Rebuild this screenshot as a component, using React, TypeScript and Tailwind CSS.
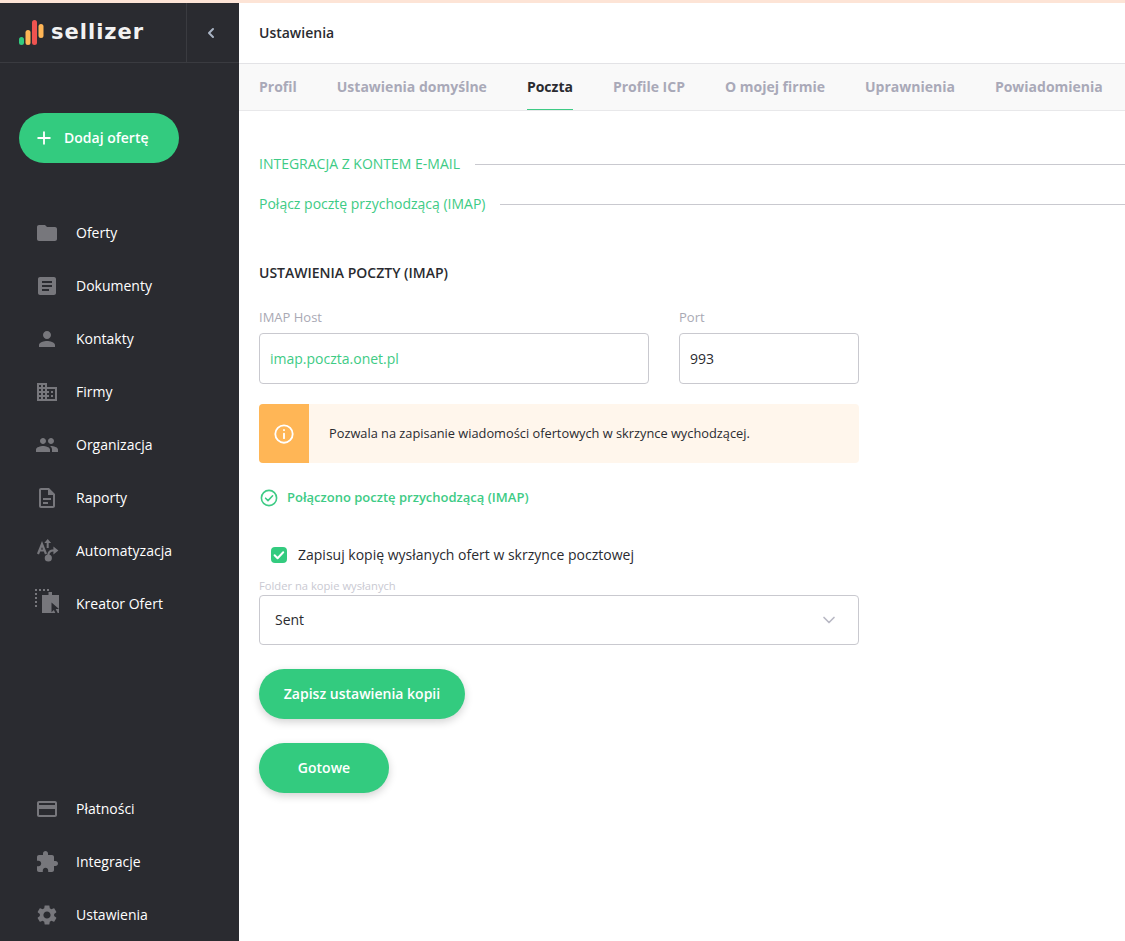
import { ChevronDown, ChevronLeft, Plus } from 'lucide-react'
import type { ReactNode } from 'react'

const icons: Record<string, ReactNode> = {
  folder: <path d="M10 4H4c-1.1 0-1.99.9-1.99 2L2 18c0 1.1.9 2 2 2h16c1.1 0 2-.9 2-2V8c0-1.1-.9-2-2-2h-8l-2-2z" />,
  article: <path d="M19 3H5c-1.1 0-2 .9-2 2v14c0 1.1.9 2 2 2h14c1.1 0 2-.9 2-2V5c0-1.1-.9-2-2-2zm-5 14H7v-2h7v2zm3-4H7v-2h10v2zm0-4H7V7h10v2z" />,
  person: <path d="M12 12c2.21 0 4-1.79 4-4s-1.79-4-4-4-4 1.79-4 4 1.79 4 4 4zm0 2c-2.67 0-8 1.34-8 4v2h16v-2c0-2.66-5.33-4-8-4z" />,
  domain: <path d="M12 7V3H2v18h20V7H12zM6 19H4v-2h2v2zm0-4H4v-2h2v2zm0-4H4V9h2v2zm0-4H4V5h2v2zm4 12H8v-2h2v2zm0-4H8v-2h2v2zm0-4H8V9h2v2zm0-4H8V5h2v2zm10 12h-8v-2h2v-2h-2v-2h2v-2h-2V9h8v10zm-2-8h-2v2h2v-2zm0 4h-2v2h2v-2z" />,
  people: <path d="M16 11c1.66 0 2.99-1.34 2.99-3S17.66 5 16 5c-1.66 0-3 1.34-3 3s1.34 3 3 3zm-8 0c1.66 0 2.99-1.34 2.99-3S9.66 5 8 5C6.34 5 5 6.34 5 8s1.34 3 3 3zm0 2c-2.33 0-7 1.17-7 3.5V19h14v-2.5c0-2.33-4.67-3.5-7-3.5zm8 0c-.29 0-.62.02-.97.05 1.16.84 1.97 1.97 1.97 3.45V19h6v-2.5c0-2.33-4.67-3.5-7-3.5z" />,
  report: <path d="M8 16h5v2H8zm0-4h8v2H8zm6-10H6c-1.1 0-2 .9-2 2v16c0 1.1.89 2 1.99 2H18c1.1 0 2-.9 2-2V8l-6-6zm4 18H6V4h7v5h5v11z" />,
  auto: (
    <>
      <path d="M3 15L7 5l4 10M4.6 11.5h4.8" fill="none" stroke="#77777c" strokeWidth="2.2" />
      <path d="M12.7 0l3.4 4h-2.4v5h-2V4H9.3l3.4-4z" />
      <circle cx="13.3" cy="19" r="3.6" />
      <path d="M12.4 16c0-3.6 2.3-5.6 6-5.6V7.4l5 4-5 4v-3c-2.4 0-4 1.2-4 3.6h-2z" />
    </>
  ),
  creator: (
    <>
      <path d="M0-3h2v2H0zM4-3h2v2H4zM8-3h2v2H8zM12-3h2v2h-2zM0 1h2v2H0zM0 5h2v2H0zM0 9h2v2H0zM0 13h2v2H0z" />
      <path d="M7 3h6.5V0h3.5v3h7v18H7z" />
      <path d="M16.5 10.5l7.5 6.4-3.3.2 2 4-1.9.9-1.9-4-2.4 2.2z" fill="#2a2b30" />
    </>
  ),
  card: <path d="M20 4H4c-1.11 0-1.99.89-1.99 2L2 18c0 1.11.89 2 2 2h16c1.11 0 2-.89 2-2V6c0-1.11-.89-2-2-2zm0 14H4v-6h16v6zm0-10H4V6h16v2z" />,
  extension: <path d="M20.5 11H19V7c0-1.1-.9-2-2-2h-4V3.5C13 2.12 11.88 1 10.5 1S8 2.12 8 3.5V5H4c-1.1 0-1.99.9-1.99 2v3.8H3.5c1.49 0 2.7 1.21 2.7 2.7s-1.21 2.7-2.7 2.7H2V20c0 1.1.9 2 2 2h3.8v-1.5c0-1.49 1.21-2.7 2.7-2.7 1.49 0 2.7 1.21 2.7 2.7V22H17c1.1 0 2-.9 2-2v-4h1.5c1.38 0 2.5-1.12 2.5-2.5S21.88 11 20.5 11z" />,
  settings: <path d="M19.14 12.94c.04-.3.06-.61.06-.94 0-.32-.02-.64-.07-.94l2.03-1.58c.18-.14.23-.41.12-.61l-1.92-3.32c-.12-.22-.37-.29-.59-.22l-2.39.96c-.5-.38-1.03-.7-1.62-.94l-.36-2.54c-.04-.24-.24-.41-.48-.41h-3.84c-.24 0-.43.17-.47.41l-.36 2.54c-.59.24-1.13.57-1.62.94l-2.39-.96c-.22-.08-.47 0-.59.22L2.74 8.87c-.12.21-.08.47.12.61l2.03 1.58c-.05.3-.09.63-.09.94s.02.64.07.94l-2.03 1.58c-.18.14-.23.41-.12.61l1.92 3.32c.12.22.37.29.59.22l2.39-.96c.5.38 1.03.7 1.62.94l.36 2.54c.05.24.24.41.48.41h3.84c.24 0 .44-.17.47-.41l.36-2.54c.59-.24 1.13-.56 1.62-.94l2.39.96c.22.08.47 0 .59-.22l1.92-3.32c.12-.22.07-.47-.12-.61l-2.01-1.58zM12 15.6c-1.98 0-3.6-1.62-3.6-3.6s1.62-3.6 3.6-3.6 3.6 1.62 3.6 3.6-1.62 3.6-3.6 3.6z" />,
}

const mainNav = [
  ['folder', 'Oferty'],
  ['article', 'Dokumenty'],
  ['person', 'Kontakty'],
  ['domain', 'Firmy'],
  ['people', 'Organizacja'],
  ['report', 'Raporty'],
  ['auto', 'Automatyzacja'],
  ['creator', 'Kreator Ofert'],
]

const bottomNav = [
  ['card', 'Płatności'],
  ['extension', 'Integracje'],
  ['settings', 'Ustawienia'],
]

const tabs = ['Profil', 'Ustawienia domyślne', 'Poczta', 'Profile ICP', 'O mojej firmie', 'Uprawnienia', 'Powiadomienia']

function NavItem({ icon, label }: { icon: string; label: string }) {
  return (
    <a className="flex h-[53px] items-center pl-[35px] text-sm font-medium text-white">
      <svg viewBox="0 0 24 24" className="h-6 w-6 shrink-0 overflow-visible fill-[#77777c]">
        {icons[icon]}
      </svg>
      <span className="ml-[17px]">{label}</span>
    </a>
  )
}

function SectionTitle({ children }: { children: ReactNode }) {
  return (
    <div className="flex items-center text-sm text-[#3ecb85]">
      <span className="whitespace-nowrap">{children}</span>
      <span className="ml-[15px] h-px flex-1 bg-[#c9c9cf]"></span>
    </div>
  )
}

function Sidebar() {
  return (
    <aside className="flex w-[239px] shrink-0 flex-col bg-[#2a2b30]">
      <div className="flex h-[60px] border-b border-[#3a3b40]">
        <div className="flex w-[187px] items-center gap-[7px] border-r border-[#3a3b40] pl-[19px]">
          <svg viewBox="0 0 25 25" className="h-[25px] w-[25px] shrink-0">
            <rect x="0" y="17" width="5" height="8" rx="2.5" fill="#33cb7f" />
            <rect x="6.5" y="10" width="5" height="15" rx="2.5" fill="#ffb656" />
            <rect x="13" y="0" width="5" height="25" rx="2.5" fill="#ef5350" />
            <rect x="19.5" y="4" width="5" height="14" rx="2.5" fill="#ffb656" />
          </svg>
          <span className="font-['DejaVu_Sans',sans-serif] text-[21px] leading-none font-bold tracking-[1px] text-[#f2f2f2]">sellizer</span>
        </div>
        <div className="flex flex-1 items-center justify-center pr-1">
          <ChevronLeft className="h-4 w-4 text-[#a9b4c4]" strokeWidth={3} />
        </div>
      </div>
      <button className="mt-[50px] ml-[19px] flex h-[50px] w-[160px] items-center rounded-full bg-[#33cb7f] pl-[15px] text-sm font-semibold text-white">
        <Plus className="h-5 w-5" strokeWidth={2.2} />
        <span className="ml-[10px]">Dodaj ofertę</span>
      </button>
      <nav className="mt-[43px] flex flex-col">
        {mainNav.map(([icon, label]) => (
          <NavItem key={label} icon={icon} label={label} />
        ))}
      </nav>
      <nav className="mt-auto flex flex-col">
        {bottomNav.map(([icon, label]) => (
          <NavItem key={label} icon={icon} label={label} />
        ))}
      </nav>
    </aside>
  )
}

function Field({ label, value, className, green }: { label: string; value: string; className: string; green?: boolean }) {
  return (
    <div className={className}>
      <label className="block text-[13px] leading-[18px] text-[#a9a9b4]">{label}</label>
      <div className={`mt-[7px] flex h-[51px] items-center rounded border border-[#c9c9cf] px-[10px] text-sm ${green ? 'text-[#3ecb85]' : 'text-[#2a2b30]'}`}>
        {value}
      </div>
    </div>
  )
}

export default function App() {
  return (
    <div className="flex h-[941px] flex-col overflow-hidden bg-white font-['Open_Sans',sans-serif]">
      <div className="h-[3px] bg-[#fde4d6]"></div>
      <div className="flex min-h-0 flex-1">
        <Sidebar />
        <main className="min-w-0 flex-1">
          <header className="flex h-[61px] items-center border-b border-[#e3e3e6] pl-5 text-sm font-semibold text-[#2a2b30]">Ustawienia</header>
          <div className="flex h-[47px] gap-10 border-b border-[#e8e8ea] bg-[#f9f9f9] pl-5">
            {tabs.map((tab) => (
              <a
                key={tab}
                className={`flex items-center whitespace-nowrap border-b text-sm font-bold ${
                  tab === 'Poczta' ? 'border-[#3ecb85] text-[#2a2b30]' : 'border-transparent text-[#a9a9b8]'
                }`}
              >
                {tab}
              </a>
            ))}
          </div>
          <div className="pt-[43px] pl-5">
            <SectionTitle>INTEGRACJA Z KONTEM E-MAIL</SectionTitle>
            <div className="mt-[20px]">
              <SectionTitle>Połącz pocztę przychodzącą (IMAP)</SectionTitle>
            </div>
            <h2 className="mt-[49px] text-sm leading-[20px] font-semibold text-[#2a2b30]">USTAWIENIA POCZTY (IMAP)</h2>
            <div className="w-[600px]">
              <div className="mt-[25px] flex gap-[30px]">
                <Field label="IMAP Host" value="imap.poczta.onet.pl" className="w-[390px]" green />
                <Field label="Port" value="993" className="w-[180px]" />
              </div>
              <div className="mt-[20px] flex h-[59px] items-center overflow-hidden rounded bg-[#fff6ec]">
                <div className="flex h-full w-[50px] items-center justify-center bg-[#ffb656]">
                  <svg viewBox="0 0 24 24" className="h-[22px] w-[22px] fill-none stroke-white" strokeWidth="2" strokeLinecap="round">
                    <circle cx="12" cy="12" r="9.5" />
                    <path d="M12 11.5v5M12 7.6v.2" />
                  </svg>
                </div>
                <p className="ml-5 text-[12.8px] text-[#2a2b30]">Pozwala na zapisanie wiadomości ofertowych w skrzynce wychodzącej.</p>
              </div>
              <div className="mt-[25px] flex items-center text-[13px] font-semibold text-[#3ecb85]">
                <svg viewBox="0 0 18 18" className="mr-[9px] ml-px h-[18px] w-[18px] fill-none stroke-[#3ecb85]" strokeWidth="1.6" strokeLinecap="round" strokeLinejoin="round">
                  <circle cx="9" cy="9" r="7.6" />
                  <path d="M5.6 9.2l2.4 2.4 4.6-4.8" />
                </svg>
                Połączono pocztę przychodzącą (IMAP)
              </div>
              <div className="mt-[37px] flex items-center pl-3 text-sm text-[#2a2b30]">
                <span className="flex h-4 w-4 items-center justify-center rounded-sm bg-[#33cb7f]">
                  <svg viewBox="0 0 16 16" className="h-4 w-4 fill-none stroke-white" strokeWidth="2" strokeLinecap="round" strokeLinejoin="round">
                    <path d="M3.6 8.2l3 3 5.6-6" />
                  </svg>
                </span>
                <span className="ml-[11px]">Zapisuj kopię wysłanych ofert w skrzynce pocztowej</span>
              </div>
              <label className="mt-[14px] block text-[11.2px] leading-[14px] text-[#c9c9d2]">Folder na kopie wysłanych</label>
              <div className="mt-[2px] flex h-[50px] items-center justify-between rounded border border-[#c9c9cf] pr-[19px] pl-[15px] text-sm text-[#2a2b30]">
                Sent
                <ChevronDown className="h-5 w-5 text-[#b8b8c4]" strokeWidth={2} />
              </div>
              <button className="mt-[24px] flex h-[50px] w-[206px] items-center justify-center rounded-full bg-[#33cb7f] text-sm font-semibold text-white shadow-[0_3px_8px_rgba(0,0,0,0.18)]">
                Zapisz ustawienia kopii
              </button>
              <button className="mt-[24px] flex h-[50px] w-[130px] items-center justify-center rounded-full bg-[#33cb7f] text-sm font-semibold text-white shadow-[0_3px_8px_rgba(0,0,0,0.18)]">
                Gotowe
              </button>
            </div>
          </div>
        </main>
      </div>
    </div>
  )
}
